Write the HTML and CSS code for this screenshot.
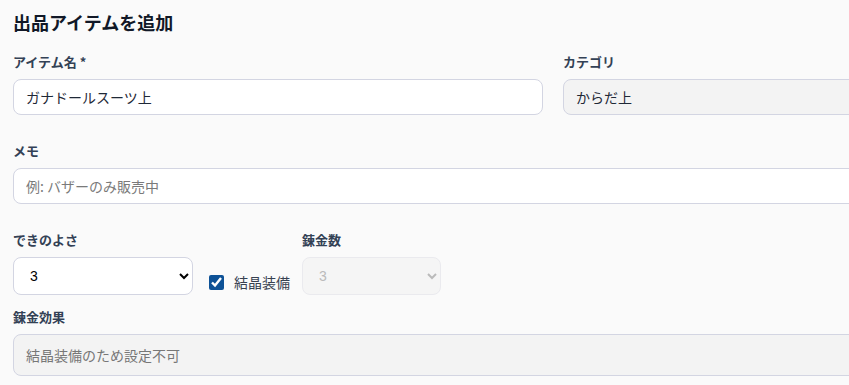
FILE: index.html
```html
<!DOCTYPE html>
<html lang="ja">
<head>
<meta charset="utf-8">
<title>出品アイテムを追加</title>
<link rel="stylesheet" href="styles.css">
</head>
<body>
<div class="page">
  <h2 class="title">出品アイテムを追加</h2>
  <div class="grid2">
    <div class="field">
      <label class="lbl">アイテム名 *</label>
      <input class="ctl" type="text" value="ガナドールスーツ上">
    </div>
    <div class="field">
      <label class="lbl">カテゴリ</label>
      <input class="ctl" type="text" value="からだ上" disabled>
    </div>
  </div>
  <div class="field">
    <label class="lbl">メモ</label>
    <input class="ctl" type="text" placeholder="例: バザーのみ販売中">
  </div>
  <div class="row">
    <div class="field field-inline">
      <label class="lbl">できのよさ</label>
      <select class="ctl sel sel-quality">
        <option>3</option>
      </select>
    </div>
    <label class="check">
      <input type="checkbox" checked>
      <span>結晶装備</span>
    </label>
    <div class="field field-inline">
      <label class="lbl">錬金数</label>
      <select class="ctl sel sel-count" disabled>
        <option>3</option>
      </select>
    </div>
  </div>
  <div class="field field-last">
    <label class="lbl">錬金効果</label>
    <input class="ctl ctl-tall" type="text" value="結晶装備のため設定不可" disabled>
  </div>
</div>
</body>
</html>
```

FILE: styles.css
```css
html, body {
  margin: 0;
  padding: 0;
  overflow: hidden;
  background: #fafafa;
}
body {
  font-family: "Noto Sans CJK JP", "Noto Sans", sans-serif;
  color: #1f2937;
}
.page {
  width: 1080px;
  padding: 8px 13px 0 13px;
}
.title {
  margin: 0 0 17px 0;
  font-size: 18px;
  line-height: 28px;
  font-weight: 700;
  color: #111827;
}
.grid2 {
  display: grid;
  grid-template-columns: 1fr 1fr;
  column-gap: 20px;
}
.field {
  display: flex;
  flex-direction: column;
  margin-bottom: 27px;
}
.lbl {
  font-size: 13px;
  line-height: 18px;
  font-weight: 700;
  color: #334155;
  margin-bottom: 8px;
}
.ctl {
  box-sizing: border-box;
  height: 36px;
  border: 1px solid #d3d5e2;
  border-radius: 8px;
  background: #ffffff;
  padding: 0 12px;
  font-family: "Noto Sans CJK JP", "Noto Sans", sans-serif;
  font-size: 14px;
  color: #1f2937;
  outline: none;
}
.ctl::placeholder {
  color: #7a7a7a;
}
.ctl:disabled {
  background: #f3f3f3;
  color: #1f2937;
}
.ctl-tall {
  height: 42px;
}
.ctl-tall:disabled {
  color: #777777;
}
.row {
  display: flex;
  align-items: flex-end;
  column-gap: 12px;
}
.field-inline {
  margin-bottom: 0;
}
.sel {
  height: 38px;
  font-family: "Liberation Sans", Arial, sans-serif;
  font-size: 14px;
  padding: 0 8px 0 12px;
}
.sel-quality {
  width: 180px;
  color: #000;
}
.sel-count {
  width: 139px;
}
.sel-count:disabled {
  background: #f3f3f3;
  color: #a0a0a0;
  border-color: #e4e4ea;
}
.check {
  display: flex;
  align-items: center;
  margin-left: 4px;
  padding-bottom: 3px;
  font-size: 14px;
  color: #374151;
}
.check input {
  width: 15px;
  height: 15px;
  margin: 0 10px 0 0;
  accent-color: #0d5196;
}
.row + .field {
  margin-top: 13px;
}
```
